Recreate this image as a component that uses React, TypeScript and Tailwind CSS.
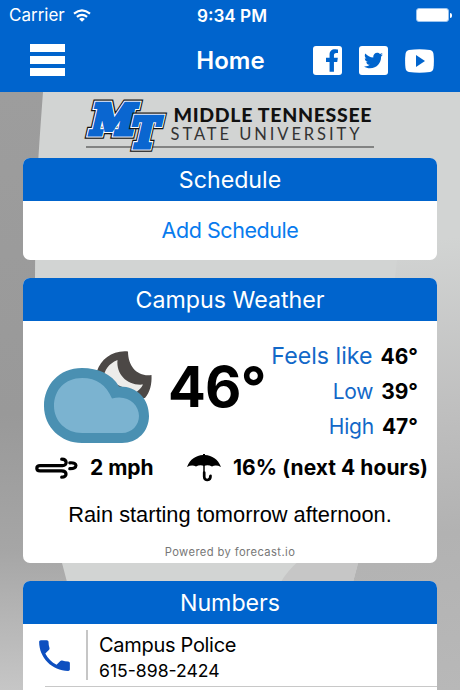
import React from 'react';
import { FaFacebookF, FaTwitter } from 'react-icons/fa';
import { MdPhone } from 'react-icons/md';

const Backdrop = () => (
  <svg className="absolute inset-0 w-full h-full" viewBox="0 0 460 690" preserveAspectRatio="none">
    <defs>
      <linearGradient id="wall" x1="0" y1="0" x2="0" y2="1">
        <stop offset="0.13" stopColor="#9d9d9d" />
        <stop offset="0.6" stopColor="#999999" />
        <stop offset="0.8" stopColor="#a6a6a6" />
        <stop offset="1" stopColor="#c6c6c6" />
      </linearGradient>
      <linearGradient id="side" gradientUnits="userSpaceOnUse" x1="420" y1="240" x2="460" y2="690">
        <stop offset="0" stopColor="#d2d4d3" />
        <stop offset="0.4" stopColor="#bebebe" />
        <stop offset="0.65" stopColor="#b2b2b2" />
        <stop offset="1" stopColor="#b8b8b8" />
      </linearGradient>
    </defs>
    <rect width="460" height="690" fill="url(#wall)" />
    <path d="M43 92C38 160 35 200 35 290C36 400 50 520 62 563L67 582L90 690H460V92Z" fill="#d2d4d3" />
    <path d="M400 235H460V690H320L353 582Q362 550 366 520Z" fill="url(#side)" />
    <path d="M281 582Q287 571 300 560H359L353 582Z" fill="#c6c6c6" />
  </svg>
);

// Letter with the black / white / blue athletic outline
const LogoLetter = ({ char, transform }: { char: string; transform: string }) => (
  <g transform={transform} fontFamily="DejaVu Serif" fontWeight="700" fontSize="41" strokeLinejoin="miter" strokeMiterlimit="3">
    <text fill="#111" stroke="#111" strokeWidth="9.5">{char}</text>
    <text fill="#fff" stroke="#fff" strokeWidth="7">{char}</text>
    <text fill="#0a66d0" stroke="#0a66d0" strokeWidth="4.8">{char}</text>
  </g>
);

const Logo = () => (
  <svg className="block w-[292px] h-[66px] overflow-visible" viewBox="84 92 292 66">
    <path d="M86 147H374" stroke="#333" strokeWidth="1" />
    <LogoLetter char="M" transform="translate(88.5 134.3) skewX(-13) scale(0.97 1)" />
    <LogoLetter char="T" transform="translate(128.5 147.3) skewX(-13) scale(0.88 1)" />
    <text x="173.5" y="121.5" fontFamily="Lato" fontWeight="900" fontSize="19.5" textLength="198" fill="#111">MIDDLE TENNESSEE</text>
    <text x="170.5" y="140" fontFamily="Lato" fontWeight="400" fontSize="16.5" textLength="189" fill="#333">STATE UNIVERSITY</text>
  </svg>
);

const WifiIcon = () => (
  <svg className="w-[18px] h-[14px]" viewBox="0 0 18 14" fill="none" stroke="#fff" strokeWidth="2.1">
    <path d="M1 4.6Q9 -2 17 4.6" />
    <path d="M3.9 7.9Q9 3.8 14.1 7.9" />
    <path d="M9 12.8L6.1 10Q9 7.6 11.9 10Z" fill="#fff" stroke="none" />
  </svg>
);

const CloudMoon = () => (
  <svg className="w-[110px] h-[94px]" viewBox="0 0 110 94">
    <path d="M84 1.500C69 0 57 9 53 21L88 50L101 48C106 42 108 34 107.500 25C94 27 84 17 84 1.500Z" fill="#4c4846" />
    <path d="M73.500 10C64 14 61 20 59 28L91 43Q97 39 99 34.500C84 36 72 25 73.500 10Z" fill="#edecea" />
    <path d="M38 18C15 18 0 35 0 56C0 77 17 93 38 93H78C94 93 105 81 105 66C105 49 93 36 75 36.500C68 24 54 18 38 18Z" fill="#4a90b2" />
    <path d="M38 28C21 28 10 40 10 56C10 71 22 83 38 83H78C88 83 95 75 95 66C95 54 83 44 68 48.500C62 35 53 28 38 28Z" fill="#7bb3d0" />
  </svg>
);

const WindIcon = () => (
  <svg className="w-[44px] h-[22px]" viewBox="0 0 44 22" fill="none" stroke="#000" strokeWidth="3.200" strokeLinecap="round">
    <path d="M26.700 2.200C32.500 2.200 32.500 8.600 27.500 8.600H5Q1.800 8.600 1.800 11.200Q1.800 13.800 5 13.800H26.500C32.500 13.800 32.500 20.200 26.700 20.200" />
    <path d="M34.800 5.800C43 5 43 12 34.800 11.700" />
  </svg>
);

const UmbrellaIcon = () => (
  <svg className="w-[34px] h-[28px]" viewBox="0 0 34 28">
    <path d="M0 13C3 5 9 1.500 16 1V0H18V1C25 1.500 31 5 34 13Q29 10.500 25 12.500Q21 10.500 17 12Q13 10.500 9 12.500Q5 10.500 0 13Z" />
    <path d="M17 10V19.500" stroke="#000" strokeWidth="1.500" />
    <path d="M17.200 18.500V22.500C17.200 27.500 23.700 27 23.500 21.800" fill="none" stroke="#000" strokeWidth="2.700" strokeLinecap="round" />
  </svg>
);

const Card = ({ title, children }: { title: string; children: React.ReactNode }) => (
  <section className="bg-white rounded-[7px] overflow-hidden">
    <h2 className="h-[43px] bg-[#0064cd] text-white text-[23.200px] leading-[44px] text-center">{title}</h2>
    {children}
  </section>
);

const details = [
  { label: 'Feels like', value: '46°', size: 'text-[23.200px]' },
  { label: 'Low', value: '39°', size: 'text-[21px] tracking-[-0.300px]' },
  { label: 'High', value: '47°', size: 'text-[21px] tracking-[-0.200px]' },
];

const App: React.FC = () => {
  return (
    <div className="relative w-[460px] h-[690px] overflow-hidden font-['Inter','Liberation_Sans',sans-serif] text-black">
      <Backdrop />
      <div className="relative flex flex-col">
        <header className="h-[92px] bg-[#0064cd] text-white">
          {/* Status bar */}
          <div className="grid grid-cols-3 items-center h-[30px] pl-[9px] pr-[5px] text-[17px]">
            <div className="flex items-center gap-[8px] pt-px">
              <span>Carrier</span>
              <WifiIcon />
            </div>
            <span className="text-center font-semibold text-[17.200px] pt-px">9:34 PM</span>
            <div className="flex items-center justify-end gap-px pr-[3px]">
              <div className="w-[33px] h-[14px] rounded-[3px] border border-[#9cc4ee] bg-white" />
              <div className="w-[2px] h-[5px] rounded-r bg-white" />
            </div>
          </div>
          {/* Nav */}
          <div className="grid grid-cols-3 items-center h-[61px] pl-[30px] pr-[26px]">
            <button className="flex flex-col gap-[4px] w-[35px] mb-px">
              <span className="h-[8px] w-full bg-white" />
              <span className="h-[8px] w-full bg-white" />
              <span className="h-[8px] w-full bg-white" />
            </button>
            <h1 className="text-center text-[24px] font-semibold pr-[3px] pt-px">Home</h1>
            <div className="flex items-center justify-end gap-[17px]">
              <span className="flex items-end justify-end shrink-0 size-[29px] rounded-[3px] bg-white text-[#0064cd] pb-[3px] pr-[3px]">
                <FaFacebookF className="w-[14px] h-[23px]" />
              </span>
              <span className="flex items-center justify-center shrink-0 size-[29px] rounded-[3px] bg-white text-[#0064cd]">
                <FaTwitter className="size-[19px]" />
              </span>
              <svg className="shrink-0 w-[29px] h-[24px]" viewBox="0 0 29 24">
                <path d="M4 1Q14.500 -0.500 25 1Q28 1.500 28.500 5Q29.300 12 28.500 19Q28 22.500 25 23Q14.500 24.500 4 23Q1 22.500 0.500 19Q-0.300 12 0.500 5Q1 1.500 4 1Z" fill="#fff" />
                <path d="M11 6L20 12L11 18Z" fill="#0064cd" />
              </svg>
            </div>
          </div>
        </header>

        <div className="h-[66px] pl-[84px]">
          <Logo />
        </div>

        <main className="flex flex-col gap-[18px] px-[23px]">
          <Card title="Schedule">
            <a className="block h-[59px] text-center text-[21.500px] tracking-[-0.450px] leading-[58px] text-[#087bee]">Add Schedule</a>
          </Card>

          <Card title="Campus Weather">
            <div className="h-[242px]">
              <div className="flex h-[132px]">
                <div className="pl-[21px] pt-[29px] w-[145px] shrink-0">
                  <CloudMoon />
                </div>
                <div className="w-[97px] shrink-0 pt-[28px] text-[56px] leading-[76px] tracking-[-0.800px] font-bold whitespace-nowrap">46°</div>
                <div className="flex-1 flex flex-col pt-[18px] pr-[19px]">
                  {details.map(d => (
                    <div key={d.label} className="h-[35.300px] flex items-center justify-end gap-[8px] whitespace-nowrap">
                      <span className={`${d.size} text-[#1268c8]`}>{d.label}</span>
                      <span className="text-[21px] font-bold">{d.value}</span>
                    </div>
                  ))}
                </div>
              </div>
              <div className="flex items-center h-[29px] pl-[12px] text-[21px] font-bold whitespace-nowrap">
                <WindIcon />
                <span className="ml-[11px] w-[97px]">2 mph</span>
                <UmbrellaIcon />
                <span className="ml-[12px] tracking-[0.050px]">16% (next 4 hours)</span>
              </div>
              <p className="pt-[17px] text-center text-[21.800px] leading-[32px] font-['Liberation_Sans',Arial,sans-serif]">Rain starting tomorrow afternoon.</p>
              <p className="pt-[12px] text-center text-[11.200px] leading-[18px] tracking-[0.400px] text-[#777]">Powered by forecast.io</p>
            </div>
          </Card>

          <Card title="Numbers">
            <div className="flex h-[62px] pl-[11px] pt-[6px]">
              <MdPhone className="size-[41px] mt-[5px] text-[#0d4fc0]" />
              <div className="ml-[11px] w-[2px] h-[50px] bg-[#c6c6c6]" />
              <div className="ml-[11px]">
                <p className="text-[20px] tracking-[-0.300px] leading-[31px]">Campus Police</p>
                <p className="text-[17.600px] leading-[20px]">615-898-2424</p>
              </div>
            </div>
            <div className="ml-[22px] h-px bg-[#c8c8c8]" />
            <div className="h-[40px]" />
          </Card>
        </main>
      </div>
    </div>
  );
};

export default App;
